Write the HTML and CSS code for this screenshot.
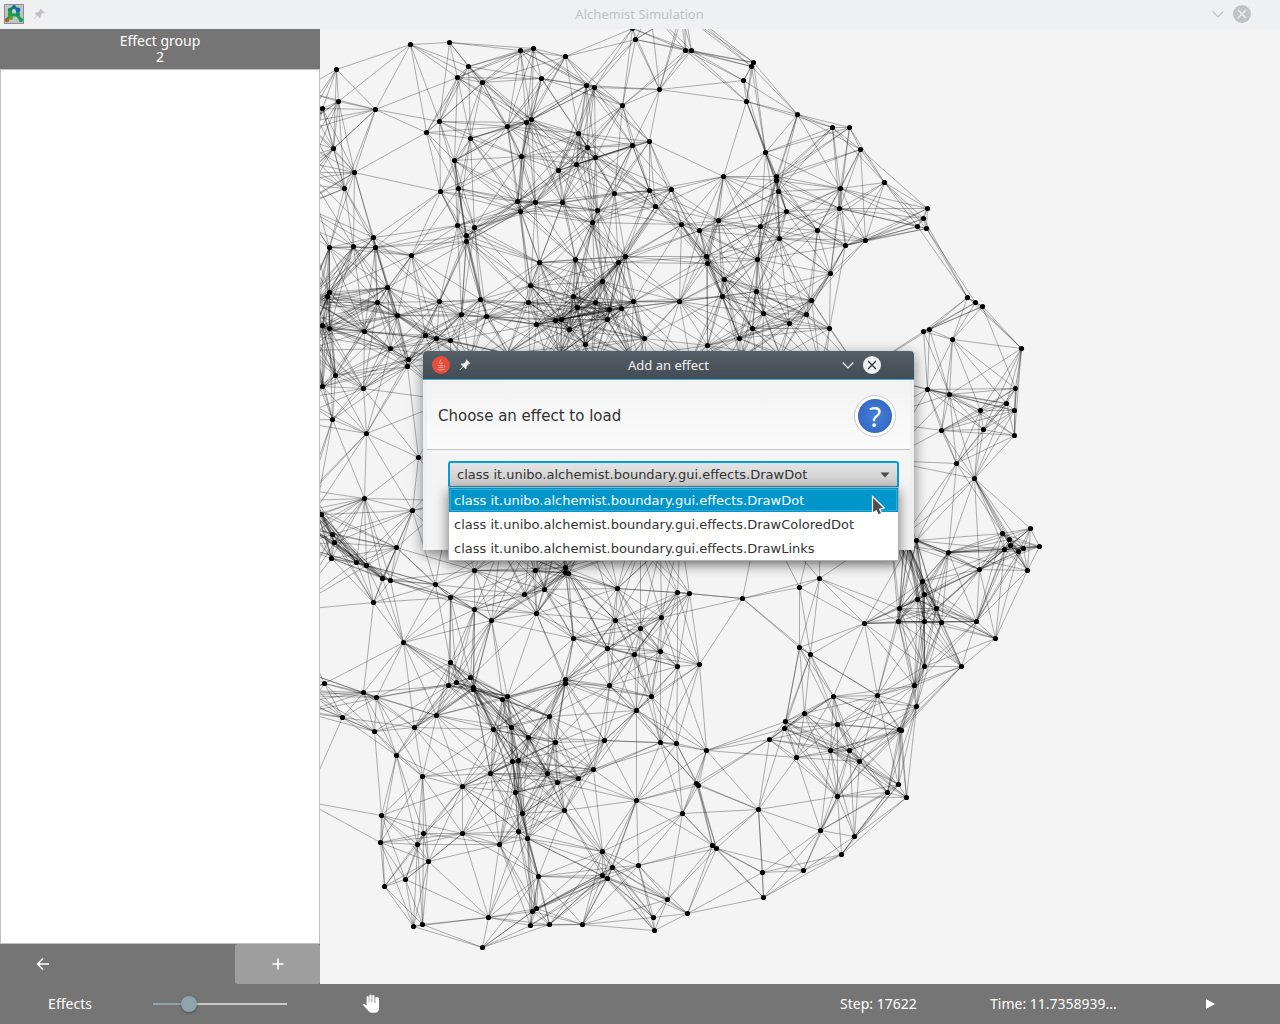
FILE: index.html
```html
<!DOCTYPE html>
<html lang="en">
<head>
<meta charset="utf-8">
<title>Alchemist Simulation</title>
<link rel="stylesheet" href="styles.css">
</head>
<body>
<div class="app">
  <header class="titlebar">
    <div class="titlebar-side">
      <svg class="app-icon" width="20" height="20" viewBox="0 0 20 20" aria-hidden="true">
        <rect x="0.5" y="0.5" width="19" height="19" fill="#c4c4c4" stroke="#8c9090"/>
        <path d="M10 3 L6 6 L7 11 L13 11 L14 6 Z M7 11 L3 16 M13 11 L17 16" fill="none" stroke="#159a5c" stroke-width="3"/>
        <circle cx="10" cy="3" r="2" fill="#1d6c9c"/><circle cx="14" cy="6" r="2.4" fill="#1861b4"/>
        <circle cx="6" cy="6" r="2.2" fill="#14876a"/><circle cx="6" cy="10" r="2.2" fill="#25a02d"/>
        <circle cx="14" cy="10" r="2.2" fill="#149464"/><circle cx="7" cy="14" r="2" fill="#58a41e"/>
        <circle cx="3" cy="16" r="2.2" fill="#b0661a"/><circle cx="17" cy="16" r="2.2" fill="#17a35c"/>
        <circle cx="10" cy="7" r="1.8" fill="#b9d4d4"/>
      </svg>
      <svg class="pin" width="12" height="12" viewBox="0 0 12 12" aria-hidden="true"><path d="M7.5 0.5 L11.5 4.5 L10.5 5.2 L9.8 5 L7.5 7.4 L7.6 9.6 L6.8 10.2 L4.4 7.8 L1 11.2 L0.6 10.8 L3.9 7.3 L1.8 5.2 L2.4 4.4 L4.6 4.5 L7 2.2 L6.8 1.3 Z" fill="currentColor"/></svg>
    </div>
    <h1 class="titlebar-text">Alchemist Simulation</h1>
    <div class="titlebar-side titlebar-end">
      <button class="window-button" aria-label="Minimize"><svg width="12" height="18" viewBox="0 0 12 18"><path d="M0.7 6.5 L6 11.8 L11.3 6.5" fill="none" stroke="currentColor" stroke-width="1.2"/></svg></button>
      <button class="window-button" aria-label="Close"><svg width="18" height="18" viewBox="0 0 18 18"><circle cx="9" cy="9" r="9" fill="#bdc3c7"/><path d="M5 5 L13 13 M13 5 L5 13" stroke="#eff0f1" stroke-width="1.3"/></svg></button>
    </div>
  </header>

  <main class="workspace">
    <aside class="sidebar">
      <h2 class="group-title">Effect group<br>2</h2>
      <div class="effect-list"></div>
      <div class="group-actions">
        <button class="flat-button" aria-label="Back"><svg width="14" height="14" viewBox="0 0 14 14"><path d="M13 7 H2 M7 1.5 L1.7 7 L7 12.5" fill="none" stroke="#fff" stroke-width="1.6"/></svg></button>
        <button class="flat-button flat-button-active" aria-label="Add effect"><svg width="12" height="12" viewBox="0 0 12 12"><path d="M6 0.5 V11.5 M0.5 6 H11.5" stroke="#fff" stroke-width="1.6"/></svg></button>
      </div>
    </aside>
    <section class="display" aria-label="Simulation display">
      <svg id="graph" class="graph"><g id="links" class="links"></g><g id="nodes"></g></svg>
    </section>
  </main>

  <footer class="controls">
    <label for="speed" class="control-center">Effects</label>
    <div class="control-center"><input id="speed" class="slider" type="range" min="0" max="100" value="24"></div>
    <button class="icon-button" aria-label="Pan">
      <svg width="18" height="20" viewBox="0 0 18 20"><path d="M4.6 11.6 V3.2 Q4.6 2 5.7 2 Q6.8 2 6.8 3.2 V8.6 H7.4 V1.6 Q7.4 0.6 8.5 0.6 Q9.6 0.6 9.6 1.6 V8.6 H10.3 V1.9 Q10.3 0.9 11.4 0.9 Q12.5 0.9 12.5 1.9 V9 H13.3 V4 Q13.3 2.9 14.4 2.9 Q15.5 2.9 17 4 V14 Q17 18.8 12.6 18.8 H10.2 Q8 18.8 6.6 16.9 L1 11 Q0.8 10 2 9.9 Q3 9.9 4.6 11.6 Z" fill="#fff"/></svg>
    </button>
    <span></span>
    <span>Step: 17622</span>
    <span>Time: 11.7358939...</span>
    <button class="icon-button" aria-label="Play"><svg width="10" height="12" viewBox="0 0 10 12"><path d="M1 1 L10 6 L1 11 Z" fill="#fff"/></svg></button>
  </footer>

  <div class="dialog" role="dialog" aria-labelledby="dialog-title">
    <header class="dialog-bar">
      <div class="titlebar-side">
        <svg width="18" height="18" viewBox="0 0 18 18" aria-hidden="true"><circle cx="9" cy="9" r="9" fill="#e74c3c"/><path d="M9.4 3.5 Q7.5 5.5 7.6 6.4 Q7.8 7.5 9 8.6 M10.4 6 Q9 7 10 8.4 M6 9.8 H11.6 M6.4 11.4 H11 M12 9.6 Q13.8 10 11.8 11.6 M5 13.4 Q9 14.8 13 13.2" fill="none" stroke="#f4b0a8" stroke-width="0.9"/></svg>
        <svg class="pin" width="12" height="12" viewBox="0 0 12 12" aria-hidden="true"><path d="M7.5 0.5 L11.5 4.5 L10.5 5.2 L9.8 5 L7.5 7.4 L7.6 9.6 L6.8 10.2 L4.4 7.8 L1 11.2 L0.6 10.8 L3.9 7.3 L1.8 5.2 L2.4 4.4 L4.6 4.5 L7 2.2 L6.8 1.3 Z" fill="currentColor"/></svg>
      </div>
      <h2 id="dialog-title" class="titlebar-text">Add an effect</h2>
      <div class="titlebar-side titlebar-end">
        <button class="window-button" aria-label="Minimize"><svg width="12" height="18" viewBox="0 0 12 18"><path d="M0.7 6.5 L6 11.8 L11.3 6.5" fill="none" stroke="currentColor" stroke-width="1.2"/></svg></button>
        <button class="window-button" aria-label="Close"><svg width="18" height="18" viewBox="0 0 18 18"><circle cx="9" cy="9" r="9" fill="#eff0f1"/><path d="M5 5 L13 13 M13 5 L5 13" stroke="#31363b" stroke-width="1.3"/></svg></button>
      </div>
    </header>
    <div class="dialog-header">
      <label for="effect">Choose an effect to load</label>
      <span class="help">?</span>
    </div>
    <div class="dialog-content">
      <div class="combo">
        <select id="effect" class="combo-field">
          <option selected>class it.unibo.alchemist.boundary.gui.effects.DrawDot</option>
          <option>class it.unibo.alchemist.boundary.gui.effects.DrawColoredDot</option>
          <option>class it.unibo.alchemist.boundary.gui.effects.DrawLinks</option>
        </select>
        <svg class="combo-arrow" width="10" height="6" viewBox="0 0 10 6" aria-hidden="true"><path d="M0.5 0.5 H9.5 L5 5.5 Z" fill="#4d4d4d"/></svg>
        <ul class="combo-popup" role="listbox" aria-label="Effects">
          <li class="combo-item combo-item-selected" role="option" aria-selected="true">class it.unibo.alchemist.boundary.gui.effects.DrawDot</li>
          <li class="combo-item" role="option">class it.unibo.alchemist.boundary.gui.effects.DrawColoredDot</li>
          <li class="combo-item" role="option">class it.unibo.alchemist.boundary.gui.effects.DrawLinks</li>
        </ul>
        <svg class="pointer" width="15" height="22" viewBox="0 0 15 22" aria-hidden="true"><path d="M1.5 1.5 L13.2 13 L8.6 14.2 L10.8 18.4 L7.4 20 L5.2 15.8 L1.5 18.2 Z" fill="#4d4d4d" stroke="#fff" stroke-width="1.2"/></svg>
      </div>
    </div>
  </div>
</div>
<script src="graph.js"></script>
</body>
</html>
```

FILE: styles.css
```css
* { box-sizing: border-box; }

body {
  margin: 0;
  font-family: "Noto Sans", sans-serif;
  font-size: 13px;
  line-height: 16px;
}

h1, h2 { margin: 0; font-size: inherit; font-weight: normal; }

button { border: 0; padding: 0; background: none; color: inherit; font: inherit; }

svg { display: block; }

.app {
  position: relative;
  display: flex;
  flex-direction: column;
  height: 100vh;
  overflow: hidden;
  background: #f4f4f4;
}

.titlebar {
  display: flex;
  align-items: center;
  flex: none;
  height: 29px;
  padding: 0 29px 2px 4px;
  background: #eff0f1;
  color: #bdc3c7;
}

.titlebar-side { display: flex; align-items: center; gap: 9px; flex: 1; }
.titlebar-end { justify-content: flex-end; }
.titlebar-text { padding-left: 24px; }

.workspace { display: flex; flex: 1; min-height: 0; }

.sidebar {
  display: flex;
  flex-direction: column;
  width: 25%;
  background: #757575;
  color: #fff;
}

.group-title { height: 40px; padding-top: 4px; font-size: 14px; text-align: center; }

.effect-list { flex: 1; border: 1px solid #c0c0c0; background: #fff; }

.group-actions { display: flex; justify-content: space-between; height: 40px; }

.flat-button { display: grid; place-items: center; width: 85px; border-radius: 3px; }
.flat-button-active { background: #9e9e9e; }

.display { flex: 1; min-width: 0; overflow: hidden; }
.graph { width: 100%; height: 100%; }
.links { fill: none; stroke: #000; stroke-width: 1; stroke-opacity: 0.3; }

.controls {
  display: grid;
  grid-template-columns: 140px 160px 142px 1fr 150px 150px 140px;
  align-items: center;
  flex: none;
  height: 40px;
  background: #757575;
  color: #fff;
  font-size: 14px;
}

.control-center, .icon-button { display: flex; justify-content: center; align-items: center; }

.slider {
  appearance: none;
  width: 134px;
  height: 16px;
  margin: 0;
  background: linear-gradient(to right, #90a4ae 27%, #c8c8c8 27%) center / 100% 2px no-repeat;
}

.slider::-webkit-slider-thumb {
  appearance: none;
  width: 16px;
  height: 16px;
  border-radius: 50%;
  background: #90a4ae;
  box-shadow: 0 1px 3px rgba(0, 0, 0, 0.35);
}

.dialog {
  position: absolute;
  top: 351px;
  left: 423px;
  width: 491px;
  height: 199px;
  border-radius: 4px 4px 0 0;
  background: #eff0f1;
  box-shadow: 0 4px 14px rgba(0, 0, 0, 0.5);
  color: #333;
}

.dialog-bar {
  display: flex;
  align-items: center;
  height: 29px;
  padding: 0 33px 0 9px;
  border-bottom: 1px solid #3daee9;
  border-radius: 4px 4px 0 0;
  background: linear-gradient(#566068, #434b53);
  color: #eff0f1;
}

.dialog-header {
  display: flex;
  justify-content: space-between;
  align-items: center;
  height: 70px;
  margin: 0 4px;
  padding: 2px 15px 0 11px;
  border-bottom: 1px solid #c4c4c4;
  background: linear-gradient(#f2f2f2, #fbfbfb);
  font-family: "DejaVu Sans", sans-serif;
  font-size: 15px;
}

.help {
  display: grid;
  place-items: center;
  width: 40px;
  height: 40px;
  border: 3px solid #fff;
  border-radius: 50%;
  outline: 1px solid #ccc;
  background: radial-gradient(#4080d8, #3460bd);
  color: #fff;
  font-family: "Noto Sans", sans-serif;
  font-size: 28px;
}

.dialog-content { margin: 0 4px; padding: 11px 11px 0 21px; background: #f4f4f4; height: 100px; }

.combo { position: relative; font-family: "DejaVu Sans", sans-serif; font-size: 13px; }

.combo-field {
  appearance: none;
  display: block;
  width: 100%;
  height: 27px;
  padding: 0 7px;
  border: 2px solid #039ed3;
  border-radius: 3px;
  background: linear-gradient(#e4e4e4, #cbcbcb);
  color: #333;
  font: inherit;
}

.combo-arrow { position: absolute; top: 11px; right: 9px; }

.combo-popup {
  position: absolute;
  top: 26px;
  left: 0;
  right: 0;
  margin: 0;
  padding: 0;
  border: 1px solid #b0b0b0;
  background: #fff;
  box-shadow: 0 4px 12px rgba(0, 0, 0, 0.5);
  list-style: none;
}

.combo-item { height: 24px; padding: 1px 5px 0; line-height: 24px; white-space: nowrap; }

.combo-item-selected {
  background: #0096c9;
  box-shadow: inset 0 0 0 1px #0096c9, inset 0 0 0 2px #30aad4;
  color: #fff;
}

.pointer { position: absolute; top: 34px; right: 13px; }
```

FILE: graph.js
```js
// Node positions in window coordinates; the display starts at ORIGIN.
const ORIGIN = [320, 29];
const RANGE = 92;

const visible = `410,44 449,42 336,69 338,101 322,108 375,109 333,148 354,172 344,188 439,121 426,132 468,66 457,77 482,82
470,138 454,160 520,50 533,48 565,56 541,78 586,85 594,87 507,126 526,122 531,119 521,156 558,170 578,133 587,147 576,164
595,157 614,193 440,191 458,188 517,201 535,202 520,211 562,202 597,210 592,222 457,225 474,227 466,235 466,241 373,237
329,247 353,246 375,247 411,255 539,262 575,259 618,262 602,281 329,292 327,296 387,287 377,302 397,315 439,301 480,299
461,314 486,316 530,285 528,302 536,324 573,296 577,307 595,302 609,309 607,319 555,320 561,319 569,329 585,344 322,325
329,328 364,331 425,335 436,338 450,340 390,348 635,39 685,50 691,50 753,62 751,66 743,80 659,89 746,101 622,105 797,114
832,127 849,127 632,145 649,141 765,152 860,149 723,176 776,176 776,180 778,191 840,188 884,182 649,190 671,189 655,206
839,208 927,208 923,218 917,226 926,228 786,211 718,220 681,224 699,230 760,226 817,230 779,238 845,245 865,240 625,256
706,256 707,263 757,259 830,273 724,279 633,301 679,301 722,296 756,291 811,300 763,313 806,314 789,323 621,308 752,328
829,328 739,338 707,345 644,338 923,331 929,329 632,28 408,359 407,366 335,375 363,388 322,386 332,419 366,433 418,457
364,498 412,510 321,514 332,534 334,542 331,558 356,562 366,565 396,547 382,578 390,580 373,602 435,584 450,597 474,570
474,609 491,620 403,642 450,662 470,677 535,570 524,594 544,589 536,613 565,567 568,573 565,572 573,638 617,588 615,620
607,648 565,679 565,683 324,683 363,692 376,697 342,717 374,731 448,685 456,682 473,687 473,689 436,715 414,727 396,755
422,776 493,729 502,699 507,696 511,727 528,737 549,716 555,742 609,685 636,710 634,654 604,740 593,769 578,778 547,773
557,782 512,761 518,760 490,773 462,786 515,792 522,813 564,810 381,815 380,842 423,833 417,844 428,861 462,833 499,844
518,831 527,838 405,879 384,886 413,926 422,924 488,917 482,947 532,911 536,908 538,876 530,925 549,924 582,924 602,851
612,867 602,875 607,878 636,800 638,865 677,592 689,593 742,598 799,587 819,578 661,617 640,628 660,651 677,666 699,664
651,696 799,647 810,654 864,623 899,608 898,621 917,599 922,581 924,594 924,621 924,666 914,685 916,706 877,695 833,696
804,713 785,721 784,728 769,739 796,757 837,724 830,750 849,750 859,761 899,729 901,730 898,784 887,792 906,797 837,796
854,836 820,830 841,854 803,870 762,872 763,897 758,809 706,750 660,742 676,743 696,783 698,785 682,813 712,845 716,848
667,899 687,913 653,917 654,930 967,297 975,302 982,306 952,339 1021,348 1015,388 1006,403 980,410 1014,410 983,429
1014,435 927,389 949,394 941,430 956,463 974,478 1030,528 1002,533 1009,539 1010,545 1004,549 1018,551 1023,548 1039,546
1027,570 979,569 948,552 916,540 936,608 941,622 976,621 995,638 961,666`;

// Nodes currently behind the dialog or panned outside the display.
const covered = `507,353 560,353 630,356 690,362 740,358 780,356 820,368 470,362 530,380 590,372 650,388 860,372
450,400 500,410 560,402 620,420 700,410 760,398 820,410 870,420 470,450 530,450 590,460 650,450 710,470 780,450
885,460 450,500 500,495 550,500 600,510 560,530 530,540 590,540 640,500 680,530 760,510 820,500 890,530 908,545
640,545 660,548 500,545 904,535
684,8 680,12 650,10
300,90 306,122 290,135 298,160 308,172 285,182 300,205 280,215 308,297 315,302 300,310 296,325 311,335 305,350
300,398 290,420 310,490 303,500 316,508 300,520 310,528 296,545 290,610
300,670 290,695 306,690 280,705 304,712 305,801`;

const points = (visible + ' ' + covered).trim().split(/\s+/).map(p => {
  const [x, y] = p.split(',').map(Number);
  return [x - ORIGIN[0] + 0.5, y - ORIGIN[1] + 0.5];
});

const SVG = 'http://www.w3.org/2000/svg';

function add(parent, name, attributes) {
  const element = document.createElementNS(SVG, name);
  Object.entries(attributes).forEach(([key, value]) => element.setAttribute(key, value));
  parent.append(element);
}

const links = document.getElementById('links');
const nodes = document.getElementById('nodes');

// Two nodes are linked when they are within communication range.
points.forEach(([x1, y1], i) => {
  points.slice(i + 1).forEach(([x2, y2]) => {
    if (Math.hypot(x1 - x2, y1 - y2) <= RANGE) add(links, 'line', { x1, y1, x2, y2 });
  });
});

points.forEach(([cx, cy]) => add(nodes, 'circle', { cx, cy, r: 2.6 }));
```
